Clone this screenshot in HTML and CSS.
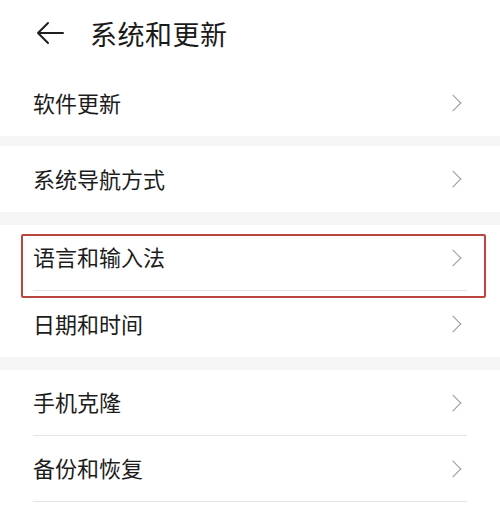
FILE: index.html
```html
<!DOCTYPE html>
<html lang="zh-CN">

<head>
    <meta charset="UTF-8">
    <meta name="viewport" content="width=device-width, initial-scale=1.0">
    <title>系统和更新</title>
    <link rel="stylesheet" href="styles.css">
</head>

<body>
    <div class="page">
        <header class="top-bar">
            <svg class="back-icon" width="28" height="24" viewBox="0 0 28 24">
                <path d="M27 12 H2 M12 2 L2 12 L12 22" fill="none" stroke="#1f1f1f" stroke-width="2" stroke-linecap="round" stroke-linejoin="round"/>
            </svg>
            <h1>系统和更新</h1>
        </header>

        <section class="group">
            <div class="row"><span class="label">软件更新</span><span class="chevron"></span></div>
        </section>

        <div class="spacer"></div>

        <section class="group">
            <div class="row"><span class="label">系统导航方式</span><span class="chevron"></span></div>
        </section>

        <div class="spacer spacer-wide"></div>

        <section class="group">
            <div class="row row-line highlighted">
                <span class="label">语言和输入法</span><span class="chevron"></span>
                <div class="mark"></div>
            </div>
            <div class="row"><span class="label">日期和时间</span><span class="chevron"></span></div>
        </section>

        <div class="spacer spacer-wide"></div>

        <section class="group">
            <div class="row row-line"><span class="label">手机克隆</span><span class="chevron"></span></div>
            <div class="row row-line"><span class="label">备份和恢复</span><span class="chevron"></span></div>
        </section>
    </div>
</body>

</html>
```

FILE: styles.css
```css
body {
    margin: 0;
    background-color: #ffffff;
    font-family: "Noto Sans CJK SC", "Noto Sans", sans-serif;
    color: #1c1c1c;
}

.page {
    width: 500px;
    height: 519px;
    overflow: hidden;
}

.top-bar {
    display: flex;
    align-items: center;
    height: 70px;
    padding-left: 36px;
    gap: 26px;
    padding-bottom: 4px;
    box-sizing: border-box;
}

.back-icon {
    display: block;
}

.top-bar h1 {
    margin: 0;
    font-size: 27px;
    font-weight: 400;
    color: #1a1a1a;
    letter-spacing: 0.5px;
}

.group {
    padding: 0 33px;
}

.row {
    position: relative;
    display: flex;
    align-items: center;
    justify-content: space-between;
    height: 66px;
    box-sizing: border-box;
}

.row-line {
    border-bottom: 1px solid #e4e4e4;
}

.label {
    font-size: 22px;
    line-height: 1;
    margin-top: -3px;
}

/* thin grey ">" drawn with two borders */
.chevron {
    width: 11px;
    height: 11px;
    margin-right: 8px;
    border-top: 1.6px solid #9a9a9a;
    border-right: 1.6px solid #9a9a9a;
    transform: rotate(45deg);
}

.spacer {
    height: 10px;
    background-color: #f5f5f5;
}

.spacer-wide {
    height: 13px;
}

/* red annotation frame drawn over the row */
.mark {
    position: absolute;
    top: 9px;
    left: -12px;
    width: 461px;
    height: 60px;
    border: 2px solid #b9473f;
    border-radius: 2px;
}
```
